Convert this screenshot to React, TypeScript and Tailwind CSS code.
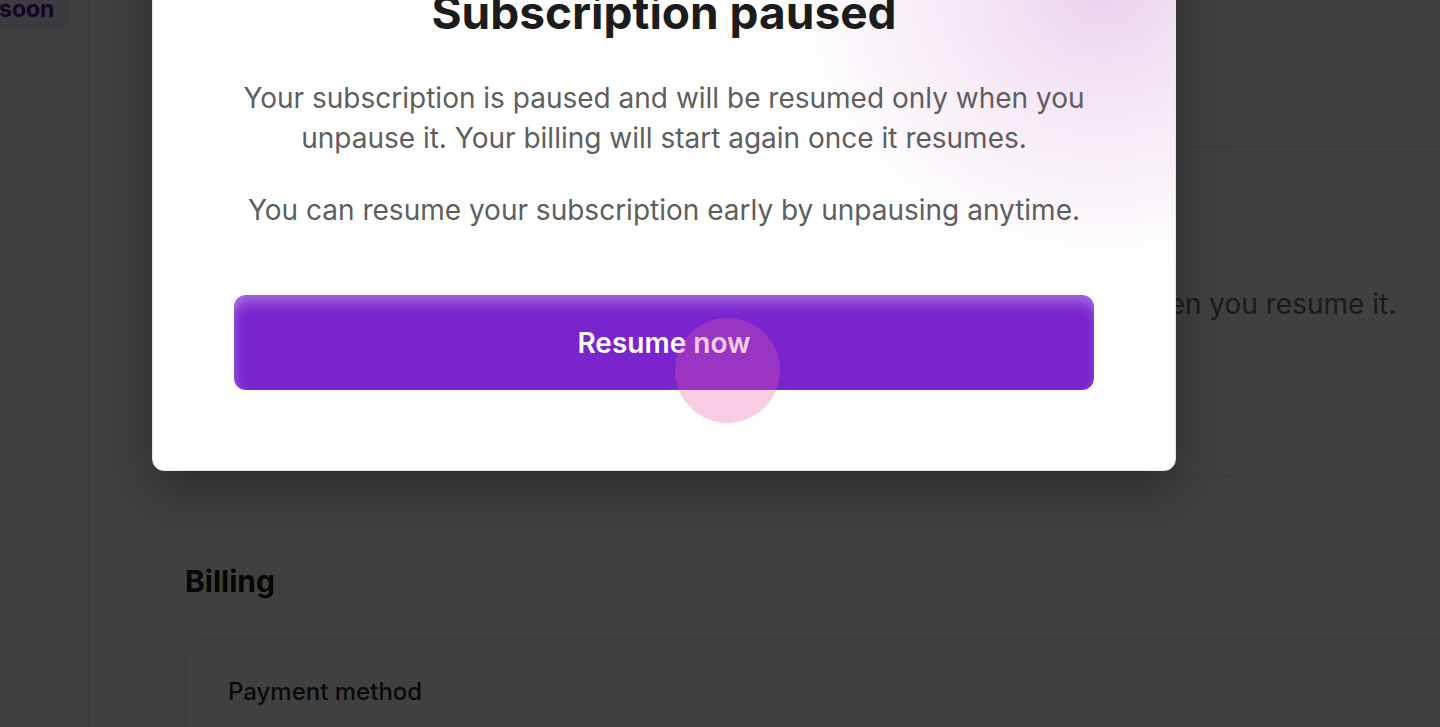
import React from 'react';

export default function App() {
  return (
    <div className="relative h-[727px] w-[1440px] overflow-hidden bg-white font-['Inter','Liberation_Sans',sans-serif]">
      {/* Page under the dialog */}
      <div className="flex h-full">
        {/* Sidebar */}
        <aside className="w-[89px] shrink-0 border-r border-neutral-200">
          <div className="-ml-[40px] -mt-[10px] w-[110px] rounded-lg bg-purple-100 py-1 pl-[39px] text-[23px] font-bold leading-[30px] text-[#4c1d95]">
            soon
          </div>
        </aside>

        {/* Main content */}
        <main className="flex w-[1300px] shrink-0 flex-col pl-[96px] pt-[146px]">
          <section className="h-[331px] w-[1300px] shrink-0 rounded-2xl border border-neutral-200 px-[42px] pt-[40px]">
            <h3 className="text-[24px] font-medium leading-[36px] text-neutral-800">Subscription</h3>
            <p className="ml-[14px] mt-[61px] whitespace-nowrap text-[28px] leading-[40px] text-[#6b6b6b]">
              Your subscription is paused. Billing and renewal dates are updated when you resume it.
            </p>
          </section>

          <h2 className="mt-[86px] shrink-0 text-[30px] font-bold leading-[36px] text-[#1a1a1a]">Billing</h2>

          <section className="mt-[39px] h-[200px] w-[1300px] shrink-0 rounded-2xl border border-neutral-200 px-[42px] pt-[36px]">
            <h3 className="text-[24px] font-medium leading-[34px] text-neutral-800">Payment method</h3>
          </section>
        </main>
      </div>

      {/* Overlay */}
      <div className="absolute inset-0 bg-black/75" />

      {/* Dialog */}
      <div className="absolute left-[152px] top-[-130px] w-[1024px] overflow-hidden rounded-xl border border-slate-200 bg-[radial-gradient(ellipse_320px_280px_at_950px_120px,#ecd3ef_0%,#f6e9f6_45%,#ffffff_100%)] shadow-[0_20px_50px_rgba(0,0,0,0.3)]">
        <div className="flex flex-col items-center px-[81px] pb-[80px] pt-[118px]">
          <h1 className="text-[46px] font-bold leading-[46px] text-[#1c1c1c]">
            Subscription paused
          </h1>

          <p className="mt-[43px] text-center text-[28px] leading-[40px] text-[#5e5e5e]">
            Your subscription is paused and will be resumed only when you
            <br />
            unpause it. Your billing will start again once it resumes.
          </p>
          <p className="mt-[32px] text-center text-[28px] leading-[40px] text-[#5e5e5e]">
            You can resume your subscription early by unpausing anytime.
          </p>

          <div className="relative mt-[65px] w-full">
            <button className="flex h-[95px] w-full items-center justify-center rounded-xl bg-[#7924cf] text-[28px] font-semibold text-white shadow-[inset_0_16px_14px_-8px_rgba(255,255,255,0.3),inset_10px_0_12px_-8px_rgba(255,255,255,0.2),inset_-8px_0_10px_-8px_rgba(255,255,255,0.15)]">
              Resume now
            </button>
            {/* click indicator */}
            <div className="pointer-events-none absolute left-[441px] top-[23px] h-[105px] w-[105px] rounded-full bg-[rgba(232,90,165,0.3)]" />
          </div>
        </div>
      </div>
    </div>
  );
}
